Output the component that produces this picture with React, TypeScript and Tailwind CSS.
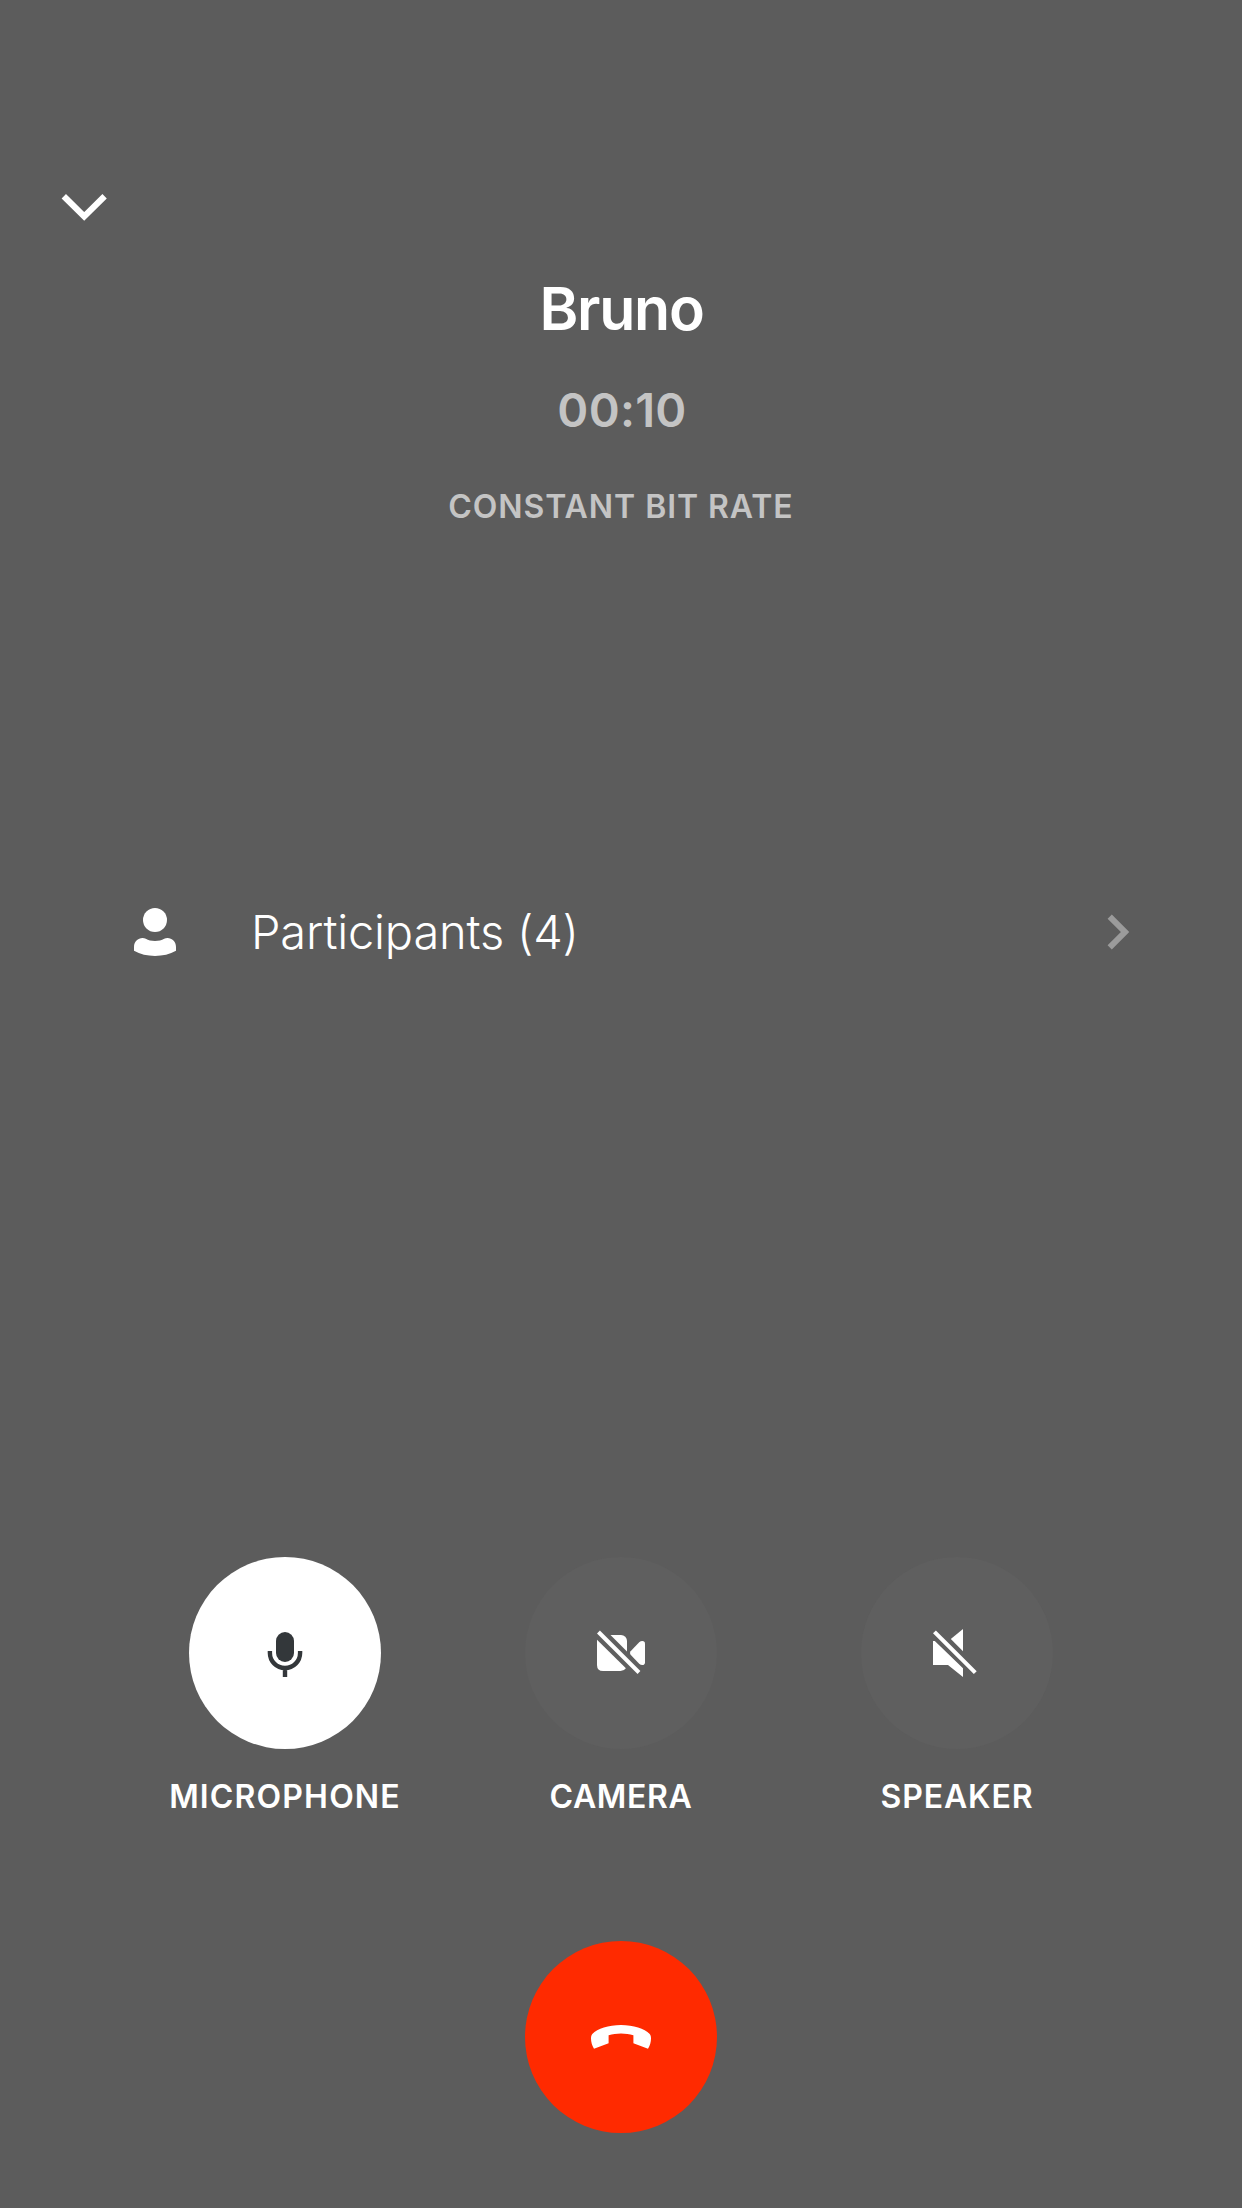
import type { ReactNode } from 'react';

function ChevronDown() {
  return (
    <svg width="48" height="36" viewBox="0 0 48 36" fill="none" stroke="#fff" strokeWidth="6.2">
      <path d="M3.8 6.2 24.2 26.4 44.6 6.2" />
    </svg>
  );
}

function ChevronRight() {
  return (
    <svg width="24" height="40" viewBox="0 0 24 40" fill="none" stroke="#9b9b9b" strokeWidth="6">
      <path d="M3.7 4.7 19 20 3.7 35.3" />
    </svg>
  );
}

function PersonIcon() {
  return (
    <svg width="42" height="48" viewBox="0 0 42 48" fill="#fff">
      <circle cx="21" cy="12" r="12" />
      <path d="M0 39C0 33.5 4 30 8.5 30C9.8 30 10.8 30.3 11.8 30.8C14.2 32.3 17.5 33 21 33C24.5 33 27.8 32.3 30.2 30.8C31.2 30.3 32.2 30 33.5 30C38 30 42 33.5 42 39V42.8C36 46.2 28.5 48 21 48C13.5 48 6 46.2 0 42.8Z" />
    </svg>
  );
}

function MicIcon() {
  return (
    <svg width="48" height="48" viewBox="0 0 48 48" fill="none">
      <rect x="15" y="3" width="18" height="30" rx="9" fill="#33373a" />
      <path d="M8.9 22V23.9A15.1 15.1 0 0 0 39.1 23.9V22M24 39V48" stroke="#33373a" strokeWidth="4.4" />
    </svg>
  );
}

function CameraOffIcon() {
  return (
    <svg width="48" height="46" viewBox="0 0 48 46" fill="#fff">
      <path d="M0 9.7 28.9 38.2Q27 41 23.5 41H6Q0 41 0 35Z" />
      <path d="M13.5 5H24A6 6 0 0 1 30 11V21.5Z" />
      <path d="M33.6 21.3 42.2 12.3Q43.6 11 45.3 11Q48 11 48 13.8V32.2Q48 35 45.3 35Q43.6 35 42.2 33.7L33.6 24.7Q32.2 23 33.6 21.3Z" />
      <path d="M2.9 .4 43.4 41 40.6 44 0 3.4Z" />
    </svg>
  );
}

function SpeakerOffIcon() {
  return (
    <svg width="48" height="48" viewBox="0 0 48 48" fill="#fff">
      <path d="M0 12H1.8L30 39.3V48L15 36H0Z" />
      <path d="M30 0V22.2L17.8 10.1Z" />
      <path d="M2.9 1.4 43.7 42.2 40.8 45 0 4.3Z" />
    </svg>
  );
}

function HangUpIcon() {
  return (
    <svg width="60" height="24" viewBox="0 0 60 24" fill="#fff">
      <path d="M30 0C17.5 0 6.5 3.5 1.3 9C.3 10.3 0 11.8 0 13.5C0 17 1 20.5 3 23.7L17.6 18.3V10.3C21.5 9.2 25.5 8.5 30 8.5C34.5 8.5 38.5 9.2 42.4 10.3V18.3L57 23.7C59 20.5 60 17 60 13.5C60 11.8 59.7 10.3 58.7 9C53.5 3.5 42.5 0 30 0Z" />
    </svg>
  );
}

function CallControl({ label, spacing, active, children }: { label: string; spacing: string; active?: boolean; children: ReactNode }) {
  return (
    <div className="flex w-[336px] flex-col items-center gap-7">
      <button aria-label={label} className={`flex size-48 items-center justify-center rounded-full ${active ? 'bg-white' : 'bg-[#5f5f5f]'}`}>
        {children}
      </button>
      <span className={`text-[32px] leading-10 font-semibold ${spacing}`}>{label}</span>
    </div>
  );
}

export default function App() {
  return (
    <main className="flex h-[2208px] w-[1242px] flex-col bg-[#5c5c5c] font-['Inter',sans-serif] text-white">
      <header className="flex flex-col pt-[190px]">
        <button aria-label="Minimize" className="ml-[60px] self-start">
          <ChevronDown />
        </button>
        <div className="mt-[47px] flex flex-col items-center">
          <h1 className="pl-px text-[59px] leading-[71px] font-semibold tracking-[-1.26px]">Bruno</h1>
          <p className="mt-[38px] pl-[2px] text-[47px] leading-[56px] font-semibold tracking-[0.28px] text-[#c4c4c4]">00:10</p>
          <p className="mt-[49px] text-[32px] leading-10 font-semibold tracking-[0.94px] text-[#c4c4c4]">CONSTANT BIT RATE</p>
        </div>
      </header>

      <button className="mt-[377px] flex h-[56px] items-center pr-[112px] pl-[134px] text-left">
        <PersonIcon />
        <span className="ml-[75px] flex-1 text-[47px] leading-[56px] font-light tracking-[-0.19px]">Participants (4)</span>
        <ChevronRight />
      </button>

      <div className="mt-[597px] flex justify-center">
        <CallControl label="MICROPHONE" spacing="tracking-[1.15px]" active>
          <MicIcon />
        </CallControl>
        <CallControl label="CAMERA" spacing="tracking-[0.65px]">
          <CameraOffIcon />
        </CallControl>
        <CallControl label="SPEAKER" spacing="tracking-[0.85px]">
          <SpeakerOffIcon />
        </CallControl>
      </div>

      <button aria-label="Hang up" className="mt-[124px] flex size-48 items-center justify-center self-center rounded-full bg-[#ff2a00]">
        <HangUpIcon />
      </button>
    </main>
  );
}
